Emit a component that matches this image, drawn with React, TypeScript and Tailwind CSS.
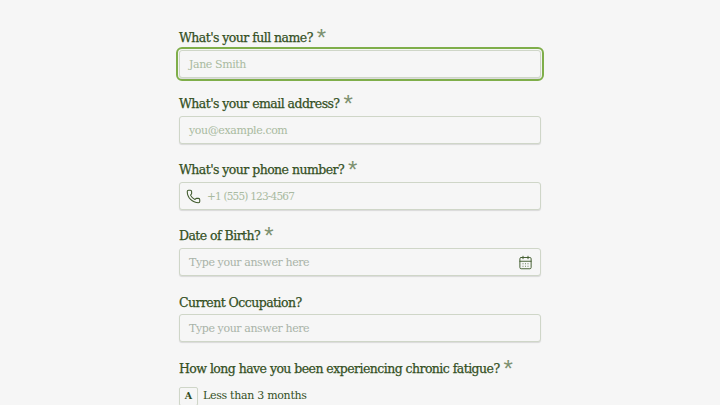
import React from 'react';
import { Phone, CalendarDays } from 'lucide-react';

const Label: React.FC<{ text: string; required?: boolean }> = ({ text, required }) => (
  <div className="flex items-start h-[22px] text-[12.5px] leading-[22px] text-[#34501f] tracking-[-0.55px] [-webkit-text-stroke:0.25px_#34501f]">
    <span className="mt-[1px]">{text}</span>
    {required && <span className="ml-[4px] text-[24px] leading-[24px] text-[#7d9170] [-webkit-text-stroke:0] font-['Liberation_Sans',sans-serif]">*</span>}
  </div>
);

const Field: React.FC<{ children: React.ReactNode; focused?: boolean }> = ({ children, focused }) => (
  <div
    className={`flex items-center h-[28px] px-[9px] rounded-[3px] border border-[#cfd6c8] bg-[#f6f6f6] text-[11px] tracking-[-0.4px] shadow-[0_1px_1px_rgba(0,0,0,0.12)] ${focused ? 'outline outline-2 outline-offset-1 outline-[#7fae4a]' : ''}`}
  >
    {children}
  </div>
);

export default function App() {
  return (
    <div className="h-[405px] overflow-hidden bg-[#f6f6f6] font-['DejaVu_Serif',serif]">
      <div className="w-[362px] ml-[179px] pt-[26px] flex flex-col gap-[14px]">
        <div className="flex flex-col gap-[2px]">
          <Label text="What's your full name?" required />
          <Field focused><span className="text-[#a9baa0] mt-[2px]">Jane Smith</span></Field>
        </div>
        <div className="flex flex-col gap-[2px]">
          <Label text="What's your email address?" required />
          <Field><span className="text-[#a9baa0] mt-[2px]">you@example.com</span></Field>
        </div>
        <div className="flex flex-col gap-[2px]">
          <Label text="What's your phone number?" required />
          <Field>
            <Phone size={15} strokeWidth={1.7} className="text-[#3f5a2c] -ml-[3px] mr-[6px]" />
            <span className="text-[#a9baa0] text-[10.5px] tracking-[-0.8px] mt-[1px]">+1 (555) 123-4567</span>
          </Field>
        </div>
        <div className="flex flex-col gap-[2px]">
          <Label text="Date of Birth?" required />
          <Field>
            <span className="flex-1 text-[#a9b3a8] mt-[2px]">Type your answer here</span>
            <CalendarDays size={15} strokeWidth={1.5} className="text-[#3f5a2c] -mr-[2px]" />
          </Field>
        </div>
        <div className="flex flex-col gap-[1px] mt-[1px]">
          <Label text="Current Occupation?" />
          <Field><span className="text-[#a9b3a8] mt-[2px]">Type your answer here</span></Field>
        </div>
        <div className="flex flex-col gap-[8px] mt-[1px]">
          <Label text="How long have you been experiencing chronic fatigue?" required />
          <div className="flex items-center gap-[5px]">
            <div className="w-[19px] h-[19px] flex items-center justify-center rounded-[2px] border border-[#cfd6c8] text-[9.5px] font-bold text-[#2f4a1c] shadow-[0_1px_1px_rgba(0,0,0,0.1)]">A</div>
            <span className="text-[11px] tracking-[-0.3px] text-[#34501f]">Less than 3 months</span>
          </div>
        </div>
      </div>
    </div>
  );
}
